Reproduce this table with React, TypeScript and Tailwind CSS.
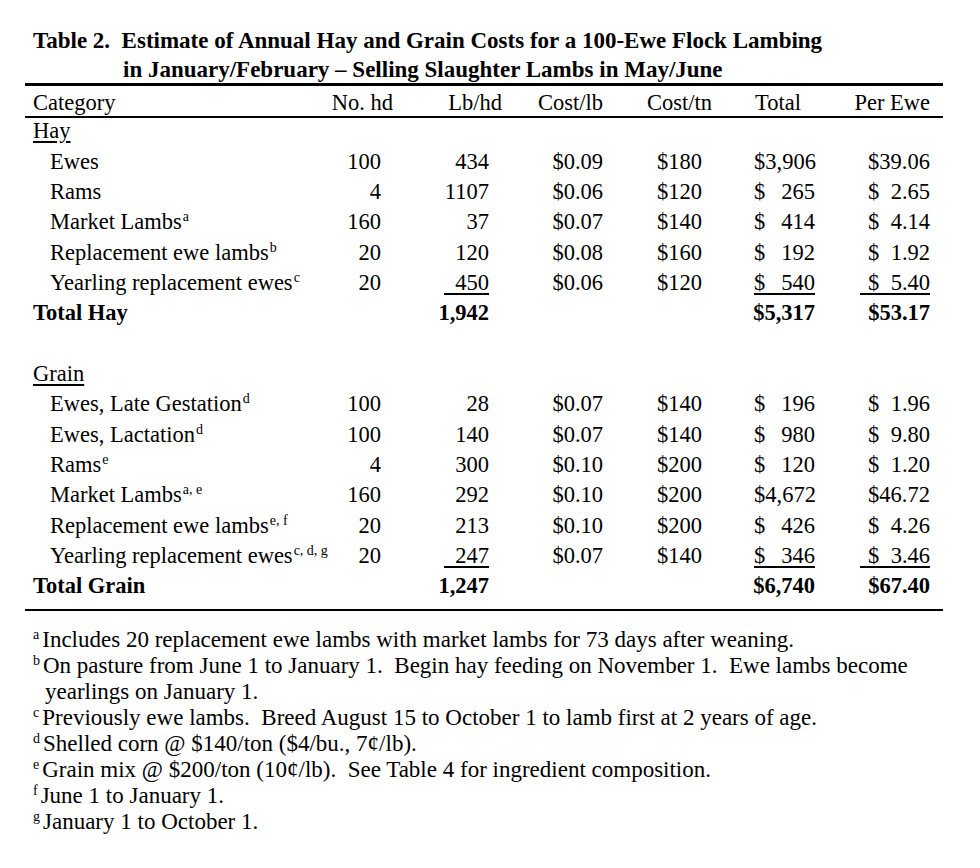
import React from 'react'

type Row = {
  label: string
  sup?: string
  hd: string
  lb: string
  costLb: string
  costTn: string
  total: [string, string]
  perEwe: [string, string]
  last?: boolean
}

const hay: Row[] = [
  { label: 'Ewes', hd: '100', lb: '434', costLb: '$0.09', costTn: '$180', total: ['$3,906', ''], perEwe: ['$39.06', ''] },
  { label: 'Rams', hd: '4', lb: '1107', costLb: '$0.06', costTn: '$120', total: ['$', '265'], perEwe: ['$', '2.65'] },
  { label: 'Market Lambs', sup: 'a', hd: '160', lb: '37', costLb: '$0.07', costTn: '$140', total: ['$', '414'], perEwe: ['$', '4.14'] },
  { label: 'Replacement ewe lambs', sup: 'b', hd: '20', lb: '120', costLb: '$0.08', costTn: '$160', total: ['$', '192'], perEwe: ['$', '1.92'] },
  { label: 'Yearling replacement ewes', sup: 'c', hd: '20', lb: '450', costLb: '$0.06', costTn: '$120', total: ['$', '540'], perEwe: ['$', '5.40'], last: true },
]

const grain: Row[] = [
  { label: 'Ewes, Late Gestation', sup: 'd', hd: '100', lb: '28', costLb: '$0.07', costTn: '$140', total: ['$', '196'], perEwe: ['$', '1.96'] },
  { label: 'Ewes, Lactation', sup: 'd', hd: '100', lb: '140', costLb: '$0.07', costTn: '$140', total: ['$', '980'], perEwe: ['$', '9.80'] },
  { label: 'Rams', sup: 'e', hd: '4', lb: '300', costLb: '$0.10', costTn: '$200', total: ['$', '120'], perEwe: ['$', '1.20'] },
  { label: 'Market Lambs', sup: 'a, e', hd: '160', lb: '292', costLb: '$0.10', costTn: '$200', total: ['$4,672', ''], perEwe: ['$46.72', ''] },
  { label: 'Replacement ewe lambs', sup: 'e, f', hd: '20', lb: '213', costLb: '$0.10', costTn: '$200', total: ['$', '426'], perEwe: ['$', '4.26'] },
  { label: 'Yearling replacement ewes', sup: 'c, d, g', hd: '20', lb: '247', costLb: '$0.07', costTn: '$140', total: ['$', '346'], perEwe: ['$', '3.46'], last: true },
]

const notes = [
  { k: 'a', t: 'Includes 20 replacement ewe lambs with market lambs for 73 days after weaning.' },
  { k: 'b', t: 'On pasture from June 1 to January 1.  Begin hay feeding on November 1.  Ewe lambs become', more: 'yearlings on January 1.' },
  { k: 'c', t: 'Previously ewe lambs.  Breed August 15 to October 1 to lamb first at 2 years of age.' },
  { k: 'd', t: 'Shelled corn @ $140/ton ($4/bu., 7¢/lb).' },
  { k: 'e', t: 'Grain mix @ $200/ton (10¢/lb).  See Table 4 for ingredient composition.' },
  { k: 'f', t: 'June 1 to January 1.' },
  { k: 'g', t: 'January 1 to October 1.' },
]

const cols = 'grid grid-cols-[275px_81px_108px_114px_99px_113px_115px] h-[30.33px] items-center'

function Money({ v, w, pad, line }: { v: [string, string]; w: string; pad?: boolean; line?: boolean }) {
  return (
    <span className={`inline-flex justify-between leading-[21px] ${w} ${pad ? 'pl-[8px]' : ''} ${line ? 'border-b-2 border-black' : ''}`}>
      <span>{v[0]}</span>
      <span>{v[1]}</span>
    </span>
  )
}

function DataRow({ r }: { r: Row }) {
  return (
    <div className={cols}>
      <div className="pl-[25px] whitespace-nowrap">
        {r.label}
        {r.sup && <sup className="text-[14px] ml-[1px] -top-[8px]">{r.sup}</sup>}
      </div>
      <div className="text-right">{r.hd}</div>
      <div className="text-right">
        <span className={`inline-block text-right leading-[21px] ${r.last ? 'w-[45px] border-b-2 border-black' : ''}`}>{r.lb}</span>
      </div>
      <div className="text-right">{r.costLb}</div>
      <div className="text-right">{r.costTn}</div>
      <div className="text-right">
        <Money v={r.total} w="w-[61px]" line={r.last} />
      </div>
      <div className="text-right">
        <Money v={r.perEwe} w="w-[70px]" pad line={r.last} />
      </div>
    </div>
  )
}

function TotalRow({ label, lb, total, per }: { label: string; lb: string; total: string; per: string }) {
  return (
    <div className={`${cols} font-bold`}>
      <div className="pl-[8px]">{label}</div>
      <div />
      <div className="text-right">{lb}</div>
      <div />
      <div />
      <div className="text-right">{total}</div>
      <div className="text-right">{per}</div>
    </div>
  )
}

export default function App() {
  return (
    <div className="w-[980px] h-[868px] bg-white text-black font-['Liberation_Serif','Times_New_Roman',serif]">
      {/* Title */}
      <div className="pt-[26px] pl-[33px] font-bold text-[23px] leading-[29px]">
        <div>Table 2.&nbsp; Estimate of Annual Hay and Grain Costs for a 100-Ewe Flock Lambing</div>
        <div className="pl-[90px]">in January/February – Selling Slaughter Lambs in May/June</div>
      </div>

      {/* Table */}
      <div className="ml-[25px] w-[918px] -mt-[1px] text-[22.5px]">
        <div className="border-t-[3px] border-b-2 border-black">
          <div className={`${cols} h-[26px]`}>
            <div className="pl-[8px]">Category</div>
            <div className="text-right">
              <span className="relative left-[12px]">No. hd</span>
            </div>
            <div className="text-right">
              <span className="relative left-[13px]">Lb/hd</span>
            </div>
            <div className="text-right">Cost/lb</div>
            <div className="text-right">
              <span className="relative left-[10px]">Cost/tn</span>
            </div>
            <div className="text-right pr-[14px]">Total</div>
            <div className="text-right">Per Ewe</div>
          </div>
        </div>

        <div className="border-b-2 border-black -mt-[4px] pb-[9px]">
          <div className={cols}>
            <div className="pl-[8px] underline underline-offset-[3px]">Hay</div>
          </div>
          {hay.map((r) => (
            <DataRow key={r.label} r={r} />
          ))}
          <TotalRow label="Total Hay" lb="1,942" total="$5,317" per="$53.17" />
          <div className={cols} />
          <div className={cols}>
            <div className="pl-[8px] underline underline-offset-[3px]">Grain</div>
          </div>
          {grain.map((r) => (
            <DataRow key={r.label} r={r} />
          ))}
          <TotalRow label="Total Grain" lb="1,247" total="$6,740" per="$67.40" />
        </div>
      </div>

      {/* Footnotes */}
      <div className="pl-[33px] pt-[16px] text-[23px] leading-[26px]">
        {notes.map((n) => (
          <div key={n.k}>
            <div className="whitespace-pre">
              <sup className="text-[14px] -top-[8px] mr-[3px]">{n.k}</sup>
              {n.t}
            </div>
            {n.more && <div className="pl-[12px]">{n.more}</div>}
          </div>
        ))}
      </div>
    </div>
  )
}
